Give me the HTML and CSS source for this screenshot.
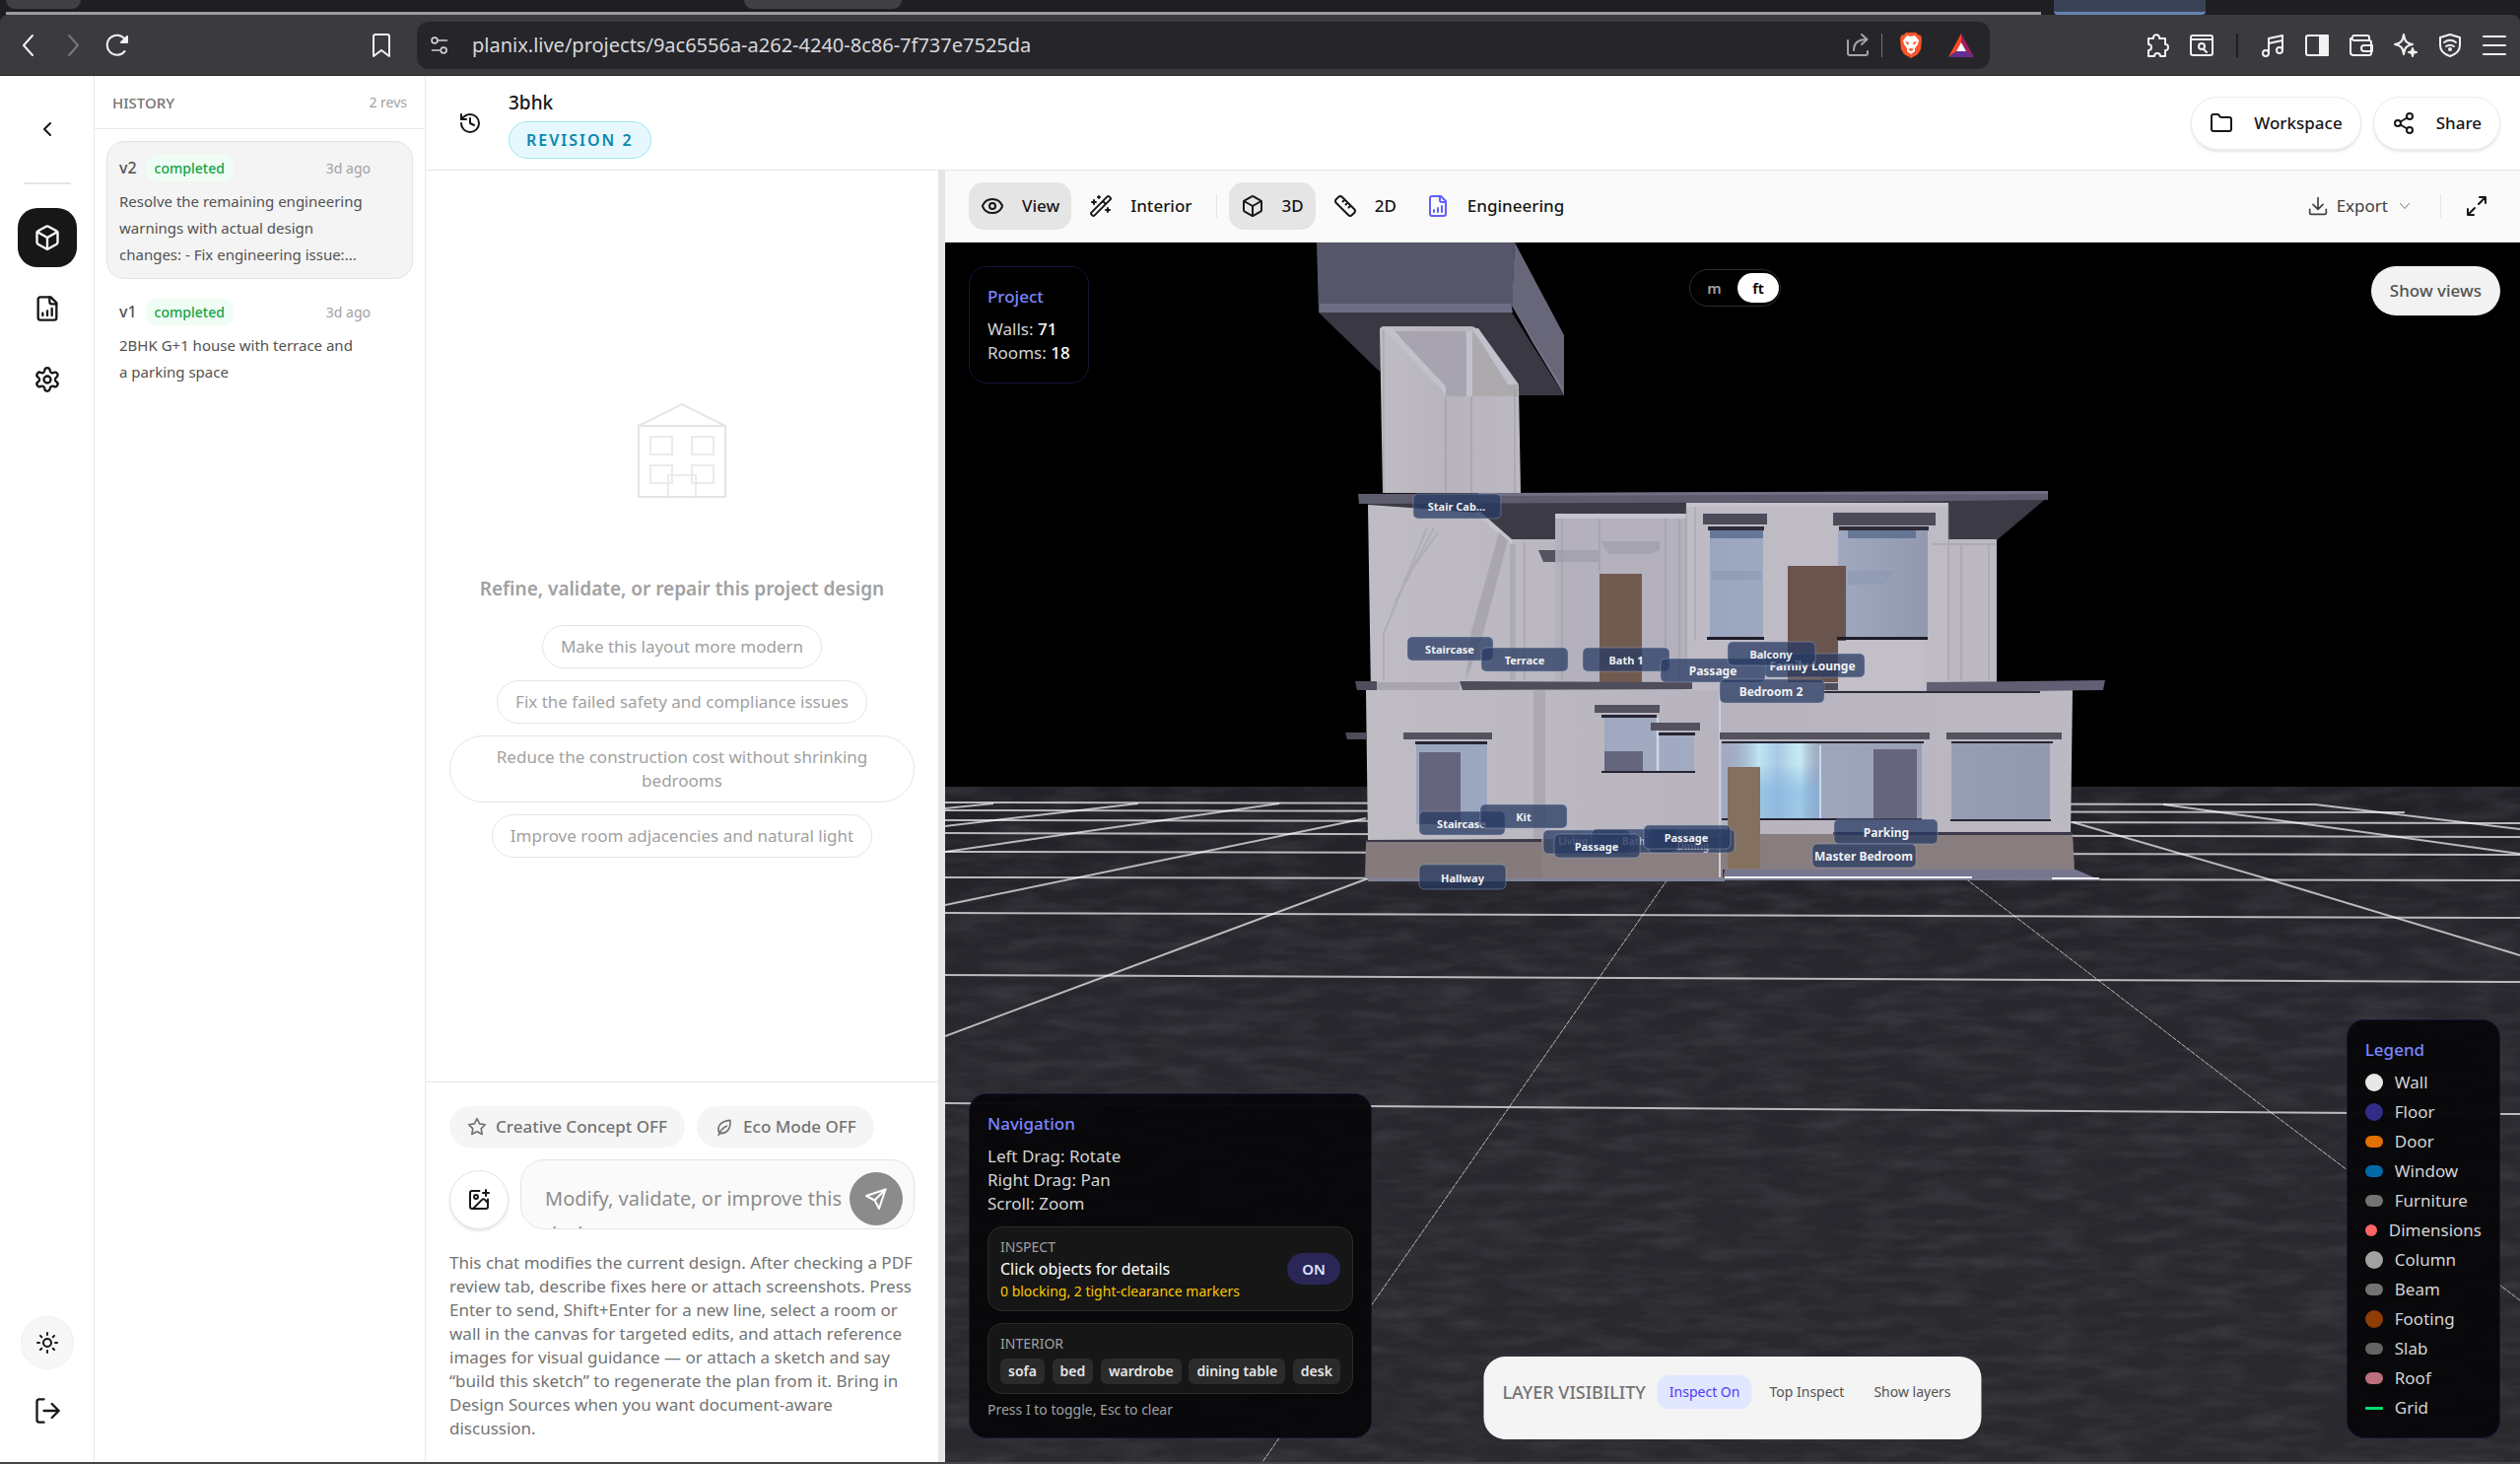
FILE: index.html
```html
<!DOCTYPE html>
<html lang="en">
<head>
<meta charset="utf-8">
<meta name="viewport" content="width=device-width, initial-scale=1">
<title>3bhk – Planix</title>
<link rel="stylesheet" href="styles.css">
</head>
<body>
<svg class="defs" aria-hidden="true">
  <symbol id="i-cube" viewBox="0 0 24 24"><path d="M21 8a2 2 0 0 0-1-1.73l-7-4a2 2 0 0 0-2 0l-7 4A2 2 0 0 0 3 8v8a2 2 0 0 0 1 1.73l7 4a2 2 0 0 0 2 0l7-4A2 2 0 0 0 21 16Z"/><path d="m3.3 7 8.7 5 8.7-5M12 22V12"/></symbol>
  <symbol id="i-report" viewBox="0 0 24 24"><path d="M15 2H6a2 2 0 0 0-2 2v16a2 2 0 0 0 2 2h12a2 2 0 0 0 2-2V7Z"/><path d="M14 2v4a2 2 0 0 0 2 2h4M8 18v-2M12 18v-4M16 18v-6"/></symbol>
</svg>

<header class="browser">
  <div class="tabs">
    <div class="tab-group"><span class="tab tab-pinned"></span><span class="tab tab-wide"></span></div>
    <div class="tab-group tab-group-blue"></div>
  </div>
  <div class="browser-bar">
    <button class="bb" aria-label="Back"><svg viewBox="0 0 24 24"><path d="m16 2-9 10 9 10"/></svg></button>
    <button class="bb dim" aria-label="Forward"><svg viewBox="0 0 24 24"><path d="m8 2 9 10-9 10"/></svg></button>
    <button class="bb" aria-label="Reload"><svg viewBox="0 0 24 24"><path d="M19.5 18A10 10 0 1 1 20.500 7"/><path d="M22 3v6h-6z" fill="currentColor"/></svg></button>
    <button class="bb bookmark" aria-label="Bookmark"><svg viewBox="0 0 24 24"><path d="M4 3a2 2 0 0 1 2-2h12a2 2 0 0 1 2 2v20l-8-6-8 6z"/></svg></button>
    <div class="omnibox">
      <svg class="bi" viewBox="0 0 24 24"><circle cx="6" cy="6" r="3.500"/><path d="M10 6h11M3 18h9"/><circle cx="17" cy="18" r="3.500"/></svg>
      <input class="url" aria-label="Address" value="planix.live/projects/9ac6556a-a262-4240-8c86-7f737e7525da">
      <button class="bb soft" aria-label="Share page"><svg viewBox="0 0 24 24"><path d="M2 7v13a2 2 0 0 0 2 2h16a2 2 0 0 0 2-2v-2"/><path d="M8 17c0-7 4-11 13-11M16 1l5.500 5-5.500 5"/></svg></button>
      <span class="omni-line"></span>
      <button class="bb" aria-label="Shields"><svg class="fill" viewBox="0 0 24 26"><path d="M7 0h10l2 2 3 1 1 4-1 10-3 5-7 4-7-4-3-5L1 7l1-4 3-1z" fill="#fb542b"/><path d="M12 4 8 3 4 8l1 4 3 4v3l4 3 4-3v-3l3-4 1-4-4-5z" fill="#fff"/><path d="m6 9 4 1-1 3zM18 9l-4 1 1 3zM9 17l3-1 3 1-3 2z" fill="#fb542b"/></svg></button>
      <button class="bb rewards" aria-label="Rewards"><svg class="fill" viewBox="0 0 26 24"><path d="M13 0v9l-5 9-8 6z" fill="#ff4724"/><path d="m13 0 13 24-8-6-5-9z" fill="#9e1f63"/><path d="M0 24h26l-8-6H8z" fill="#662d91"/><path d="m13 9 5 9H8z" fill="#fff"/></svg></button>
    </div>
    <div class="browser-tools">
      <button class="bb" aria-label="Extensions"><svg viewBox="0 0 24 24"><path d="M3 5h5c-1-5 7-5 6 0h6v6c4-1 4 7 0 6v6h-5c0-4-6-4-6 0H3v-6c4 0 4-6 0-6z"/></svg></button>
      <button class="bb" aria-label="Search tabs"><svg viewBox="0 0 24 24"><rect x="1" y="2" width="22" height="20" rx="2"/><path d="M1 6h22M14 16l3 3"/><circle cx="12" cy="13" r="3"/></svg></button>
      <span class="tools-line"></span>
      <button class="bb" aria-label="Media"><svg viewBox="0 0 24 24"><circle cx="5" cy="20" r="3"/><circle cx="19" cy="17" r="3"/><path d="M8 20V5l14-3v15M8 10l14-3"/></svg></button>
      <button class="bb" aria-label="Sidebar"><svg viewBox="0 0 24 24"><rect x="1" y="2" width="22" height="20" rx="2"/><path d="M15 2h8v20h-8z" fill="currentColor"/></svg></button>
      <button class="bb" aria-label="Wallet"><svg viewBox="0 0 24 24"><path d="M20 6V4a2 2 0 0 0-2-2H4a3 3 0 0 0 0 5h16a2 2 0 0 1 2 2v11a2 2 0 0 1-2 2H4a3 3 0 0 1-3-3V5"/><path d="M23 12h-8a2 2 0 0 0 0 6h8z"/></svg></button>
      <button class="bb" aria-label="Assistant"><svg viewBox="0 0 24 24"><path d="M10 1c1 7 3 9 9 10-6 1-8 3-9 10-1-7-3-9-9-10 6-1 8-3 9-10z"/><path d="M19 15c.5 3 1 3.500 4 4-3 .5-3.500 1-4 4-.5-3-1-3.500-4-4 3-.5 3.500-1 4-4z" fill="currentColor"/></svg></button>
      <button class="bb" aria-label="VPN"><svg viewBox="0 0 24 24"><path d="M12 1 22 4v8c0 6-4 9-10 11C6 21 2 18 2 12V4z"/><path d="M6 9c4-3 8-3 12 0M8 13c3-2 5-2 8 0"/><circle cx="12" cy="16" r="1" fill="currentColor"/></svg></button>
      <button class="bb" aria-label="Menu"><svg viewBox="0 0 24 24"><path d="M1 3h22M1 12h22M1 21h22"/></svg></button>
    </div>
  </div>
</header>

<div class="app">
  <nav class="rail" aria-label="Main">
    <button class="rail-btn" aria-label="Back to projects"><svg class="ic" viewBox="0 0 24 24"><path d="m15 18-6-6 6-6"/></svg></button>
    <span class="rail-line"></span>
    <button class="rail-btn active" aria-label="Model"><svg class="ic lg"><use href="#i-cube"/></svg></button>
    <button class="rail-btn" aria-label="Reports"><svg class="ic lg"><use href="#i-report"/></svg></button>
    <button class="rail-btn" aria-label="Settings"><svg class="ic lg" viewBox="0 0 24 24"><path d="M9.700 4.100a2.300 2.300 0 0 1 4.600 0 2.300 2.300 0 0 0 3.300 1.900 2.300 2.300 0 0 1 2.300 4 2.300 2.300 0 0 0 0 3.900 2.300 2.300 0 0 1-2.300 4 2.300 2.300 0 0 0-3.300 1.900 2.300 2.300 0 0 1-4.600 0 2.300 2.300 0 0 0-3.300-1.900 2.300 2.300 0 0 1-2.300-4 2.300 2.300 0 0 0 0-3.900 2.300 2.300 0 0 1 2.300-4 2.300 2.300 0 0 0 3.300-1.900"/><circle cx="12" cy="12" r="3"/></svg></button>
    <div class="rail-end">
      <button class="theme-btn" aria-label="Theme"><svg class="ic" viewBox="0 0 24 24"><circle cx="12" cy="12" r="4"/><path d="M12 2v2M12 20v2M4.900 4.900l1.400 1.400M17.700 17.700l1.400 1.400M2 12h2M20 12h2M6.300 17.700l-1.400 1.400M19.100 4.900l-1.400 1.400"/></svg></button>
      <button class="rail-btn" aria-label="Log out"><svg class="ic lg" viewBox="0 0 24 24"><path d="M9 22H5a2 2 0 0 1-2-2V4a2 2 0 0 1 2-2h4M9 12h13M16 6l6 6-6 6"/></svg></button>
    </div>
  </nav>

  <aside class="history">
    <div class="history-head"><h2>HISTORY</h2><span>2 revs</span></div>
    <article class="rev current">
      <div class="rev-row"><b>v2</b><span class="badge">completed</span><time>3d ago</time></div>
      <p>Resolve the remaining engineering warnings with actual design changes: - Fix engineering issue:...</p>
    </article>
    <article class="rev">
      <div class="rev-row"><b>v1</b><span class="badge">completed</span><time>3d ago</time></div>
      <p>2BHK G+1 house with terrace and a parking space</p>
    </article>
  </aside>

  <main class="work">
    <header class="project-head">
      <button class="plain" aria-label="Toggle history"><svg class="ic" viewBox="0 0 24 24"><path d="M3 12a9 9 0 1 0 9-9 9.750 9.750 0 0 0-6.740 2.740L3 8"/><path d="M3 3v5h5M12 7v5l4 2"/></svg></button>
      <div class="project-name"><h1>3bhk</h1><span class="revision">REVISION 2</span></div>
      <div class="head-actions">
        <button class="pill-btn"><svg class="ic" viewBox="0 0 24 24"><path d="M20 20a2 2 0 0 0 2-2V8a2 2 0 0 0-2-2h-7.900a2 2 0 0 1-1.700-.9L9.600 3.900A2 2 0 0 0 7.900 3H4a2 2 0 0 0-2 2v13a2 2 0 0 0 2 2Z"/></svg>Workspace</button>
        <button class="pill-btn"><svg class="ic" viewBox="0 0 24 24"><circle cx="18" cy="5" r="3"/><circle cx="6" cy="12" r="3"/><circle cx="18" cy="19" r="3"/><path d="m8.600 13.500 6.800 4M15.400 6.500l-6.800 4"/></svg>Share</button>
      </div>
    </header>

    <section class="chat">
      <div class="empty">
        <svg class="house" viewBox="0 0 144 144"><path d="M28 32h88v72H28zM28 32l44-22 44 22"/><path class="thin" d="M40 43h22v18H40zM82 43h22v18H82zM40 72h22v18H40zM82 72h22v18H82zM58 104V82h28v22"/></svg>
        <h2>Refine, validate, or repair this project design</h2>
        <div class="prompts">
          <button>Make this layout more modern</button>
          <button>Fix the failed safety and compliance issues</button>
          <button>Reduce the construction cost without shrinking bedrooms</button>
          <button>Improve room adjacencies and natural light</button>
        </div>
      </div>
      <form class="composer">
        <div class="modes">
          <button type="button"><svg class="ic sm" viewBox="0 0 24 24"><path d="m12 2 3.100 6.300 6.900 1-5 4.900 1.200 6.800-6.200-3.200L5.800 21 7 14.200 2 9.300l6.900-1z"/></svg>Creative Concept OFF</button>
          <button type="button"><svg class="ic sm" viewBox="0 0 24 24"><path d="M6 20C2 11 8 5 19 4c1 10-3 16-13 16M5 22c2-6 5-9 10-11"/></svg>Eco Mode OFF</button>
        </div>
        <div class="entry">
          <button type="button" class="attach" aria-label="Attach image"><svg class="ic" viewBox="0 0 24 24"><path d="M16 5h6M19 2v6M21 11.500V19a2 2 0 0 1-2 2H5a2 2 0 0 1-2-2V5a2 2 0 0 1 2-2h7.500"/><path d="m21 15-3.100-3.100a2 2 0 0 0-2.800 0L6 21"/><circle cx="9" cy="9" r="2"/></svg></button>
          <div class="field">
            <textarea aria-label="Message" placeholder="Modify, validate, or improve this design..."></textarea>
            <button type="button" class="send" aria-label="Send"><svg class="ic" viewBox="0 0 24 24"><path d="M21.500 2.500 2 9l8.500 4.500L15 22z"/><path d="m21.500 2.500-11 11"/></svg></button>
          </div>
        </div>
        <p>This chat modifies the current design. After checking a PDF review tab, describe fixes here or attach screenshots. Press Enter to send, Shift+Enter for a new line, select a room or wall in the canvas for targeted edits, and attach reference images for visual guidance — or attach a sketch and say “build this sketch” to regenerate the plan from it. Bring in Design Sources when you want document-aware discussion.</p>
      </form>
    </section>

    <div class="resizer"></div>

    <section class="viewer">
      <div class="viewer-bar">
        <button class="tool on"><svg class="ic" viewBox="0 0 24 24"><path d="M2 12.300a1 1 0 0 1 0-.6 10.800 10.800 0 0 1 20 0 1 1 0 0 1 0 .6 10.800 10.800 0 0 1-20 0"/><circle cx="12" cy="12" r="3"/></svg>View</button>
        <button class="tool"><svg class="ic" viewBox="0 0 24 24"><path d="m21.600 3.600-1.200-1.200a1.200 1.200 0 0 0-1.800 0L2.400 18.600a1.200 1.200 0 0 0 0 1.800l1.200 1.200a1.200 1.200 0 0 0 1.800 0L21.600 5.400a1.200 1.200 0 0 0 0-1.800M14 7l3 3M5 6v4M19 14v4M10 2v2M7 8H3M21 16h-4M11 3H9"/></svg>Interior</button>
        <span class="tool-line"></span>
        <button class="tool on"><svg class="ic"><use href="#i-cube"/></svg>3D</button>
        <button class="tool"><svg class="ic" viewBox="0 0 24 24"><path d="M2.700 8.700a2.400 2.400 0 0 1 0-3.400l2.600-2.600a2.400 2.400 0 0 1 3.400 0l12.600 12.600a2.400 2.400 0 0 1 0 3.400l-2.600 2.600a2.400 2.400 0 0 1-3.400 0ZM14.500 8.500l-2 2M11.500 5.500l-2 2M17.500 11.500l-2 2"/></svg>2D</button>
        <button class="tool"><svg class="ic blue"><use href="#i-report"/></svg>Engineering</button>
        <div class="viewer-end">
          <button class="export"><svg class="ic sm" viewBox="0 0 24 24"><path d="M12 2v14M6 10l6 6 6-6M2 16v4a2 2 0 0 0 2 2h16a2 2 0 0 0 2-2v-4"/></svg>Export<svg class="ic xs" viewBox="0 0 24 24"><path d="m3 7 9 10 9-10"/></svg></button>
          <span class="tool-line"></span>
          <button class="plain" aria-label="Full screen"><svg class="ic" viewBox="0 0 24 24"><path d="M15 3h6v6M21 3l-7 7M3 21l7-7M9 21H3v-6"/></svg></button>
        </div>
      </div>

      <div class="stage">
        <svg class="scene" viewBox="959 246 1598 1237" preserveAspectRatio="xMidYMid slice" role="img" aria-label="3D model of the house">
          <defs>
            <filter id="soil" x="0" y="0" width="100%" height="100%"><feTurbulence type="fractalNoise" baseFrequency="0.018 0.08" numOctaves="5" seed="4"/><feColorMatrix values="0 0 0 0 0.090  0 0 0 0 0.085  0 0 0 0 0.100  2 0 0 0 -0.750"/></filter>
            <linearGradient id="ground" x1="0" y1="0" x2="0" y2="1"><stop offset="0" stop-color="#232127"/><stop offset=".3" stop-color="#29272e"/><stop offset="1" stop-color="#2a292e"/></linearGradient>
            <linearGradient id="wall" x1="0" y1="0" x2="1" y2="0"><stop offset="0" stop-color="#bfbcc4"/><stop offset=".5" stop-color="#b7b4bf"/><stop offset="1" stop-color="#bcb9c3"/></linearGradient>
            <linearGradient id="glass" x1="0" y1="0" x2="1" y2="0"><stop offset="0" stop-color="#9aa6bf"/><stop offset=".5" stop-color="#a2abc1"/><stop offset="1" stop-color="#9299af"/></linearGradient>
            <linearGradient id="glow" x1="0" y1="0" x2="1" y2="0"><stop offset="0" stop-color="#a4c4e0" stop-opacity="0"/><stop offset=".3" stop-color="#bfe6f2"/><stop offset=".5" stop-color="#a9c9e2"/><stop offset=".75" stop-color="#c6edf6"/><stop offset="1" stop-color="#9fb4cf" stop-opacity="0"/></linearGradient>
            <linearGradient id="glow-low" x1="0" y1="0" x2="0" y2="1"><stop offset="0" stop-color="#6d9cd4" stop-opacity="0"/><stop offset=".5" stop-color="#7fb0e0" stop-opacity=".6"/><stop offset="1" stop-color="#7ba8d6" stop-opacity=".5"/></linearGradient>
          </defs>
          <rect x="959" y="246" width="1598" height="1237" fill="#000"/>
          <rect x="959" y="798" width="1598" height="685" fill="url(#ground)"/>
          <rect x="959" y="798" width="1598" height="685" filter="url(#soil)" opacity=".36"/>

          <g class="grid">
            <path d="M959 814 2349 816M959 822 2440 824M959 832 2557 835M959 845 2557 849M959 864 2557 867M959 890 2557 893M959 926 2557 931M959 989 2557 996M959 1119 2557 1130"/>
            <path d="M1008 815 959 820M1155 815 959 838M1298 815 959 864M1386 830 959 918M1391 890 959 1051M2349 816 2557 841M2195 816 2557 866M2103 834 2299 891 2557 969"/>
            <path class="far" d="M1692 892 1281 1483M1985 884 2130 995 2305 1129 2557 1319"/>
          </g>

          <!-- stair tower -->
          <path fill="#3a3943" d="M1338 317H1534L1587 401H1440L1398 375z"/>
          <path fill="#56566a" d="M1336 246H1537L1534 317H1338z"/>
          <path fill="#6d6d84" d="M1339 308H1533L1535 317H1339z"/>
          <path fill="#686779" d="M1537 246 1587 340V401L1534 310z"/>
          <path fill="#7a798f" d="M1534 308 1558 349 1586 393V398L1554 346z" opacity=".7"/>
          <path fill="url(#wall)" d="M1400 333 1403 331H1494L1500 334 1541 391 1543 500H1403z"/>
          <path fill="#a7a4b0" d="M1416 336H1487L1494 402H1467z"/>
          <path fill="#adaaae" d="M1494 336 1540 391V402H1494z"/>
          <path fill="#c2c0cb" d="M1403 333H1412L1467 392V402L1461 394zM1488 336H1494V402H1488zM1494 333H1500L1541 390H1530z"/>
          <path class="seam" d="M1467 402V500M1493 402V500M1404 335V500M1537 395V500"/>

          <!-- upper floor -->
          <path fill="#3b3a45" d="M1378 508 2078 504 2026 548H1500z"/>
          <path fill="url(#wall)" d="M1388 512 1500 520 1532 547H2026V704H1391z"/>
          <path fill="#b4b1bd" d="M1578 523 1711 521V700H1578z"/>
          <path fill="#bebbc5" d="M1711 511 1977 510V700H1711z"/>
          <path fill="#c6c3ce" d="M1578 521H1711V526H1578zM1711 510H1977V514H1711zM1496 520 1502 519 1534 547V552z"/>
          <path fill="#a9a6b0" d="M1521 540 1530 548 1503 650 1487 690 1493 640z"/>
          <path fill="#a09da8" d="M1532 552H1538V690H1532z" opacity=".5"/>
          <path class="seam" d="M1405 640 1448 535M1404 690V640M1416 610 1455 535M1424 590 1459 540M1547 550V690M1585 526V690M1623 526V580M1690 526V690M1704 526V690M1711 514V690M1720 514V650M1977 512V690M1990 552V690M2018 552V690M1960 552H2026"/>
          <path fill="#5e5d70" d="M1378 501 2078 498V507L1900 509 1379 511z"/>
          <path fill="#716f86" d="M1500 500 2078 498V501L1500 503z"/>
          <path fill="#55535f" d="M1561 558H1578V570H1566z"/>
          <path fill="#a09dab" d="M1578 558H1622V570H1578zM1624 549H1684V558L1675 562H1632z" opacity=".7"/>
          <path fill="#4d4b59" d="M1728 521H1793V532H1728zM1860 520H1964V533H1860z"/>
          <path fill="#2e2b38" d="M1733 534H1790V538H1733zM1866 534H1957V538H1866z"/>
          <path fill="url(#glass)" d="M1735 538H1789V648H1735zM1865 538H1956V648H1865z"/>
          <path fill="#596b8d" d="M1735 538H1789V546H1735zM1875 538H1944V546H1875z" opacity=".8"/>
          <path fill="#8c97b2" d="M1737 579H1787V588H1737zM1875 579H1922L1912 593H1875z" opacity=".6"/>
          <path fill="#705b50" d="M1623 582H1666V692H1623z"/>
          <path fill="#6a544e" d="M1814 574H1873V692H1814z"/>
          <path fill="#c2bfc9" d="M1865 650H1952V700H1865z"/>
          <path fill="#1f1c2a" d="M1732 646H1790V649H1732zM1864 646H1956V649H1864z"/>

          <!-- ground floor -->
          <path fill="url(#wall)" d="M1386 700H2103L2101 847 1746 850 1388 853z"/>
          <path fill="#a19eaa" d="M1556 700H1568V852H1556z" opacity=".6"/>
          <path fill="#857b7c" d="M1386 853 1564 851V891H1385z"/>
          <path fill="#8a8081" d="M1564 851H1748V891H1564z"/>
          <path fill="#887e80" d="M1746 846H2103L2105 882H1748z"/>
          <path fill="#3b394a" d="M1386 852 1564 851V854H1386zM1860 844H2102V847H1860z"/>
          <path fill="#4f4d5c" d="M1375 691H1397V700H1377zM1481 691 1717 692V699L1484 700zM1850 693H1865V700H1850z"/>
          <path fill="#605f74" d="M1955 692 2136 690 2134 700 1955 702z"/>
          <path fill="#2e2c38" d="M1850 701H2070V703H1850z"/>
          <path fill="#9e9ba8" d="M1397 692H1481V700H1397z" opacity=".7"/>
          <path fill="#4d4c5b" d="M1365 743H1386V750H1367z"/>
          <path fill="#77768f" d="M1750 882H2106L2132 893H1748z"/>
          <path fill="#7d8499" d="M1388 891H1750V894H1388z"/>
          <path stroke="#f3f3ff" stroke-width="2" d="M1750 890H2001M2082 891H2130"/>
          <path stroke="#d0cedb" stroke-width="2" d="M1745 704V890"/>

          <path fill="url(#glass)" d="M1437 755H1509V836H1437zM1628 728H1680V783H1628zM1684 746H1719V783H1684zM1747 754H1950V831H1747zM1980 754H2080V831H1980z"/>
          <path fill="#65667e" d="M1440 763H1482V836H1440zM1628 762H1667V783H1628zM1901 760H1945V830H1901z"/>
          <rect x="1757" y="754" width="93" height="77" fill="url(#glow)"/>
          <rect x="1780" y="775" width="66" height="56" fill="url(#glow-low)"/>
          <path stroke="#c5d9ea" stroke-width="2" d="M1847 756V830M1682 728V783"/>
          <path fill="#54525f" d="M1424 743H1514V750H1424zM1618 715H1684V723H1618zM1675 733H1725V741H1675zM1745 743H1958V750H1745zM1975 743H2092V750H1975z"/>
          <path fill="#262433" d="M1436 752H1509V755H1436zM1625 725H1681V728H1625zM1683 743H1720V746H1683zM1747 752H1952V754H1747zM1980 752H2083V754H1980zM1625 782H1720V784H1625zM1747 830H1950V832H1747zM1979 831H2081V833H1979z"/>
          <path fill="#84705f" d="M1753 778H1786V881H1753z"/>

          <g class="tags">
            <g class="hidden-tag"><rect x="1566" y="842" width="88" height="24" rx="5"/><text x="1612" y="857">Living Room</text></g>
            <g class="hidden-tag"><rect x="1615" y="841" width="86" height="24" rx="5"/><text x="1662" y="857">Bath 2</text></g>
            <g class="hidden-tag"><rect x="1672" y="841" width="88" height="24" rx="5"/><text x="1718" y="862">Dining</text></g>
            <g><rect x="1434" y="501" width="89" height="25" rx="5"/><text x="1478" y="518">Stair Cab…</text></g>
            <g><rect x="1428" y="646" width="87" height="24" rx="5"/><text x="1471" y="663">Staircase</text></g>
            <g><rect x="1503" y="657" width="88" height="24" rx="5"/><text x="1547" y="674">Terrace</text></g>
            <g><rect x="1606" y="657" width="88" height="24" rx="5"/><text x="1650" y="674">Bath 1</text></g>
            <g class="big"><rect x="1790" y="663" width="102" height="24" rx="5"/><text x="1839" y="680">Family Lounge</text></g>
            <g class="big"><rect x="1685" y="668" width="106" height="24" rx="5"/><text x="1738" y="685">Passage</text></g>
            <g><rect x="1753" y="651" width="89" height="24" rx="5"/><text x="1797" y="668">Balcony</text></g>
            <g class="big"><rect x="1745" y="689" width="106" height="24" rx="5"/><text x="1797" y="706">Bedroom 2</text></g>
            <g><rect x="1440" y="823" width="87" height="24" rx="5"/><text x="1483" y="840">Staircase</text></g>
            <g><rect x="1502" y="816" width="88" height="24" rx="5"/><text x="1546" y="833">Kit</text></g>
            <g><rect x="1577" y="846" width="87" height="24" rx="5"/><text x="1620" y="863">Passage</text></g>
            <g><rect x="1668" y="837" width="88" height="24" rx="5"/><text x="1711" y="854">Passage</text></g>
            <g class="big"><rect x="1861" y="831" width="105" height="25" rx="5"/><text x="1914" y="849">Parking</text></g>
            <g class="big"><rect x="1839" y="856" width="105" height="24" rx="5"/><text x="1891" y="873">Master Bedroom</text></g>
            <g><rect x="1440" y="877" width="88" height="25" rx="5"/><text x="1484" y="895">Hallway</text></g>
          </g>
        </svg>

        <div class="card summary">
          <h3>Project</h3>
          <p>Walls: <b>71</b></p>
          <p>Rooms: <b>18</b></p>
        </div>

        <div class="units"><button>m</button><button class="on">ft</button></div>
        <button class="views">Show views</button>

        <div class="card navigation">
          <h3>Navigation</h3>
          <p>Left Drag: Rotate</p>
          <p>Right Drag: Pan</p>
          <p>Scroll: Zoom</p>
          <div class="box inspect">
            <div><span class="cap">INSPECT</span><span class="strong">Click objects for details</span><span class="warn">0 blocking, 2 tight-clearance markers</span></div>
            <button class="on-btn">ON</button>
          </div>
          <div class="box interior">
            <span class="cap">INTERIOR</span>
            <div class="chips"><span>sofa</span><span>bed</span><span>wardrobe</span><span>dining table</span><span>desk</span></div>
          </div>
          <small>Press I to toggle, Esc to clear</small>
        </div>

        <div class="layers">
          <h3>LAYER VISIBILITY</h3>
          <button class="on">Inspect On</button><button>Top Inspect</button><button>Show layers</button>
        </div>

        <div class="card legend">
          <h3>Legend</h3>
          <ul>
            <li><i class="sw tall wall"></i>Wall</li>
            <li><i class="sw tall floor"></i>Floor</li>
            <li><i class="sw door"></i>Door</li>
            <li><i class="sw window"></i>Window</li>
            <li><i class="sw gray"></i>Furniture</li>
            <li><i class="sw dims"></i>Dimensions</li>
            <li><i class="sw tall column"></i>Column</li>
            <li><i class="sw gray"></i>Beam</li>
            <li><i class="sw tall footing"></i>Footing</li>
            <li><i class="sw slab"></i>Slab</li>
            <li><i class="sw roof"></i>Roof</li>
            <li><i class="sw line"></i>Grid</li>
          </ul>
        </div>
      </div>
    </section>
  </main>
</div>
</body>
</html>
```
FILE: styles.css
```css
*, *::before, *::after { box-sizing: border-box; }
body {
  margin: 0;
  height: 100vh;
  display: flex;
  flex-direction: column;
  font: 16px/24px "Noto Sans", "Open Sans", sans-serif;
  color: #171717;
  background: #fff;
  border-bottom: 2px solid #454746;
}
h1, h2, h3, p, ul { margin: 0; padding: 0; }
ul { list-style: none; }
button { font: inherit; color: inherit; background: none; border: 0; padding: 0; cursor: pointer; }
.defs { display: none; }
.ic {
  width: 24px; height: 24px; flex: none;
  fill: none; stroke: currentColor; stroke-width: 2;
  stroke-linecap: round; stroke-linejoin: round;
}
.ic.lg { width: 28px; height: 28px; }
.ic.sm { width: 20px; height: 20px; }
.ic.xs { width: 12px; height: 12px; color: #737373; }
.ic.blue { color: #615fff; }

/* browser frame */
.browser { flex: none; background: #1f1f23; }
.tabs { display: flex; gap: 13px; height: 15px; padding: 0 319px 0 6px; }
.tab-group { flex: 1; border-bottom: 3px solid #9c9ca0; display: flex; }
.tab-group-blue { flex: 0 0 154px; background: #3a4356; border-color: #6483b5; border-radius: 0 0 4px 4px; }
.tab { height: 9px; background: #414145; border-radius: 0 0 10px 10px; }
.tab-pinned { width: 76px; }
.tab-wide { width: 160px; margin-left: 673px; }
.browser-bar {
  display: flex; align-items: center; height: 62px;
  padding: 0 13px 0 16px; background: #3b3b3f; color: #f2f2f2;
  border-bottom: 1px solid #2a2a2c; border-radius: 8px 8px 0 0;
}
.bb { width: 26px; height: 26px; flex: none; display: grid; place-items: center; }
.bb + .bb { margin-left: 19px; }
.bb svg, .bi { width: 24px; height: 24px; fill: none; stroke: currentColor; stroke-width: 2; stroke-linecap: round; stroke-linejoin: round; }
.bb svg.fill { stroke: none; width: 26px; height: 26px; }
.bb.dim { color: #77777b; }
.bb.soft { color: #a5a5a9; }
.bb.bookmark { margin-left: 242px; }
.omnibox {
  flex: 1; display: flex; align-items: center; height: 48px;
  margin: 0 157px 0 23px; padding: 0 16px 0 13px;
  background: #26262a; border-radius: 12px;
}
.bi { width: 20px; color: #d0d0d3; }
.url { flex: 1; min-width: 0; margin-left: 23px; padding: 0; border: 0; outline: 0; background: none; color: #d8d8dc; font: 20px/30px "Noto Sans", sans-serif; }
.omni-line { width: 1px; height: 24px; background: #77777b; margin: 0 16px 0 11px; }
.omnibox .rewards { margin-left: 25px; }
.browser-tools { display: flex; align-items: center; gap: 19px; }
.browser-tools .bb { margin: 0; }
.tools-line { width: 2px; height: 24px; margin: 0 3px; background: #1f1f23; }

/* app frame */
.app { flex: 1; min-height: 0; display: flex; }
.rail {
  flex: none; width: 96px; border-right: 1px solid #e9e9e9;
  display: flex; flex-direction: column; align-items: center; gap: 12px; padding: 24px 0 22px;
}
.rail-btn { width: 60px; height: 60px; display: grid; place-items: center; border-radius: 20px; }
.rail-btn.active { background: #171717; color: #fff; }
.rail-line { width: 48px; height: 2px; margin: 12px 0 12px; background: #e5e5e5; }
.rail-end { margin-top: auto; display: grid; justify-items: center; gap: 12px; }
.theme-btn { width: 54px; height: 54px; display: grid; place-items: center; border-radius: 50%; background: #f7f7f7; border: 1px solid #efefef; }

.history { flex: none; width: 336px; border-right: 1px solid #e9e9e9; display: flex; flex-direction: column; gap: 6px; }
.history-head {
  display: flex; justify-content: space-between; align-items: center; height: 54px;
  padding: 0 18px; margin-bottom: 6px; border-bottom: 1px solid #e9e9e9; font-size: 14px; color: #a1a1a1;
}
.history-head h2 { font-size: 15px; font-weight: 500; color: #737373; }
.rev { margin: 0 12px; padding: 13px 42px 10px 12px; border: 1px solid transparent; border-radius: 18px; font-size: 15px; line-height: 27px; color: #525252; }
.rev.current { background: #f4f4f4; border-color: #e3e3e3; }
.rev-row { display: flex; align-items: center; gap: 9px; margin-bottom: 7px; height: 27px; }
.rev p { padding-right: 6px; }
.rev-row b { font-size: 16px; font-weight: 500; }
.badge { padding: 0 9px; border-radius: 12px; background: #f0fdf4; color: #16a34a; font-size: 14px; font-weight: 500; }
.rev-row time { margin-left: auto; color: #a1a1a1; font-size: 14px; }

.work { flex: 1; min-width: 0; display: grid; grid-template: auto minmax(0, 1fr) / 520px 7px minmax(0, 1fr); }
.project-head {
  grid-column: 1 / -1; display: flex; align-items: center; height: 96px;
  padding: 0 20px 0 33px; border-bottom: 1px solid #e5e5e5;
}
.plain { display: grid; place-items: center; width: 24px; height: 24px; }
.project-name { margin-left: 27px; display: grid; justify-items: start; gap: 4px; }
.project-name h1 { font-size: 19px; line-height: 30px; font-weight: 500; }
.revision {
  height: 38px; padding: 0 17px; line-height: 36px; border: 1px solid #a2e6f5; border-radius: 19px;
  background: #e6f8fd; color: #0b87ae; font-size: 16px; font-weight: 600; letter-spacing: 2px;
}
.head-actions { margin-left: auto; display: flex; gap: 12px; }
.pill-btn {
  display: flex; align-items: center; gap: 21px; height: 54px; padding: 0 18px;
  border: 1px solid #ececec; border-radius: 27px; font-size: 17px; font-weight: 500; background: #fff;
  box-shadow: 0 2px 3px rgba(0, 0, 0, .1);
}

/* chat column */
.chat { display: flex; flex-direction: column; min-height: 0; font-size: 17px; }
.empty { flex: 1; display: flex; flex-direction: column; align-items: center; justify-content: center; padding: 0 24px; color: #a1a1a1; }
.house { width: 144px; height: 144px; fill: none; stroke: #e5e5e5; stroke-width: 2; }
.house .thin { stroke: #ebebeb; }
.empty h2 { margin: 38px 0 22px; font-size: 19px; line-height: 30px; font-weight: 600; white-space: nowrap; }
.prompts { display: flex; flex-direction: column; align-items: center; gap: 12px; }
.prompts button { padding: 9px 18px; border: 1px solid #e5e5e5; border-radius: 34px; }
.composer { padding: 24px; padding-bottom: 22px; border-top: 1px solid #e5e5e5; color: #737373; }
.modes { display: flex; gap: 12px; }
.modes button { display: flex; align-items: center; gap: 9px; height: 42px; padding: 0 18px; border-radius: 21px; background: #f5f5f5; font-weight: 500; }
.entry { display: flex; gap: 12px; align-items: flex-end; margin: 12px 0 22px; }
.attach { width: 60px; height: 60px; flex: none; display: grid; place-items: center; border-radius: 50%; border: 1px solid #e5e5e5; color: #171717; background: #fff; box-shadow: 0 2px 3px rgba(0, 0, 0, .1); }
.field { flex: 1; min-width: 0; display: flex; align-items: flex-end; height: 71px; padding: 0 11px 3px 24px; border: 1px solid #e5e5e5; border-radius: 24px; background: #fafafa; }
.field textarea {
  flex: 1; min-width: 0; height: 69px; margin-bottom: -3px; padding: 21px 0 0; border: 0; outline: 0; resize: none; overflow: hidden;
  background: none; font: 20px/36px "Noto Sans", sans-serif; color: #171717;
}
.field textarea::placeholder { color: #8c8c8c; opacity: 1; }
.send { width: 54px; height: 54px; flex: none; display: grid; place-items: center; border-radius: 50%; background: #8b8b8b; color: #fff; }

.resizer { background: #e5e5e5; }

/* viewer column */
.viewer { display: flex; flex-direction: column; min-width: 0; min-height: 0; }
.viewer-bar { flex: none; display: flex; align-items: center; gap: 6px; height: 73px; padding: 0 32px 0 24px; background: #fafafa; border-bottom: 1px solid #e5e5e5; }
.tool { display: flex; align-items: center; gap: 18px; height: 48px; padding: 0 12px; border-radius: 15px; font-size: 17px; font-weight: 500; }
.tool.on { background: #e5e5e5; }
.tool-line { width: 1px; height: 24px; margin: 0 6px; background: #e5e5e5; }
.viewer-end { margin-left: auto; display: flex; align-items: center; gap: 24px; }
.viewer-end .tool-line { margin: 0; }
.export { display: flex; align-items: center; gap: 9px; margin-right: 6px; font-size: 17px; color: #404040; }
.export .xs { margin-left: 2px; }

.stage { flex: 1; min-height: 0; position: relative; overflow: hidden; background: #000; }
.scene { position: absolute; inset: 0; width: 100%; height: 100%; }
.grid path { fill: none; stroke: #fff; stroke-width: 2; opacity: .68; }
.grid .far { stroke-width: 1; stroke-dasharray: 5 1; }
.seam { fill: none; stroke: #8f8b99; stroke-width: 2; opacity: .3; }
.tags rect { fill: #273a62; fill-opacity: .74; stroke: #a9b6d0; stroke-opacity: .4; }
.tags text { fill: #eef0f2; font: 700 11px "Noto Sans", sans-serif; text-anchor: middle; }
.tags .big text { font-size: 12px; }
.tags .hidden-tag text { opacity: .6; font-size: 10px; }

.card { position: absolute; padding: 18px; border: 1px solid #17143a; border-radius: 18px; background: rgba(8, 8, 10, .98); color: #d4d4d4; font-size: 17px; }
.card h3 { margin-bottom: 9px; font-size: 17px; font-weight: 500; color: #7c86ff; }
.summary { left: 24px; top: 24px; min-width: 121px; background: #000; }
.summary b { font-weight: 500; color: #fff; }
.units { position: absolute; top: 27px; left: 50%; margin-left: -44px; display: flex; align-items: center; height: 38px; padding: 0 1px; border: 1px solid #2c2c2c; border-radius: 19px; background: #000; color: #a1a1a1; font-size: 15px; font-weight: 600; }
.units button { width: 47px; height: 30px; border-radius: 15px; }
.units .on { width: 42px; background: #fff; color: #000; }
.views { position: absolute; right: 20px; top: 24px; height: 50px; padding: 0 19px; border-radius: 25px; background: #f2f2f2; color: #525252; font-size: 17px; font-weight: 500; }

.navigation { left: 24px; bottom: 24px; width: 409px; }
.box { border: 1px solid #2b2b2b; border-radius: 15px; background: #161617; padding: 9px 12px; }
.inspect { display: flex; align-items: center; justify-content: space-between; margin: 11px 0 12px; }
.inspect span { display: block; }
.cap { display: block; font-size: 14px; line-height: 21px; color: #a1a1a1; }
.strong { font-size: 16px; color: #fff; }
.warn { font-size: 14px; line-height: 21px; color: #fcc800; }
.on-btn { height: 32px; padding: 0 15px; border-radius: 16px; background: #2a2757; color: #dfe3ff; font-size: 15px; font-weight: 600; }
.chips { display: flex; justify-content: space-between; margin-top: 5px; }
.chips span { height: 26px; padding: 0 8px; border-radius: 6px; background: #2b2b2c; color: #e5e5e5; font-size: 14px; line-height: 26px; font-weight: 600; }
.navigation small { display: block; margin-top: 6px; font-size: 14px; line-height: 20px; color: #a1a1a1; }

.layers { position: absolute; left: 50%; bottom: 23px; transform: translateX(-50%); display: flex; align-items: center; gap: 6px; padding: 19px 19px 31px; border-radius: 22px; background: #f4f4f4; white-space: nowrap; }
.layers h3 { margin-right: 6px; font-size: 18px; font-weight: 500; color: #737373; }
.layers button { height: 34px; padding: 0 12px; border-radius: 12px; font-size: 14px; color: #525252; }
.layers .on { background: #e0e7ff; color: #4f39f6; }

.legend { right: 20px; bottom: 24px; }
.legend ul { display: grid; gap: 6px; }
.legend li { display: flex; align-items: center; gap: 12px; }
.sw { width: 18px; height: 12px; border-radius: 6px; }
.sw.tall { height: 18px; border-radius: 9px; }
.sw.wall { background: #e8e8e8; }
.sw.floor { background: #312c85; }
.sw.door { background: #e17100; }
.sw.window { background: #0069a8; }
.sw.gray { background: #737373; }
.sw.dims { width: 12px; background: #ff6467; }
.sw.column { background: #a1a1a1; }
.sw.footing { background: #8f3d05; }
.sw.slab { background: #636363; }
.sw.roof { background: #bc6f7c; }
.sw.line { height: 3px; border-radius: 1px; background: #05df72; }
```
